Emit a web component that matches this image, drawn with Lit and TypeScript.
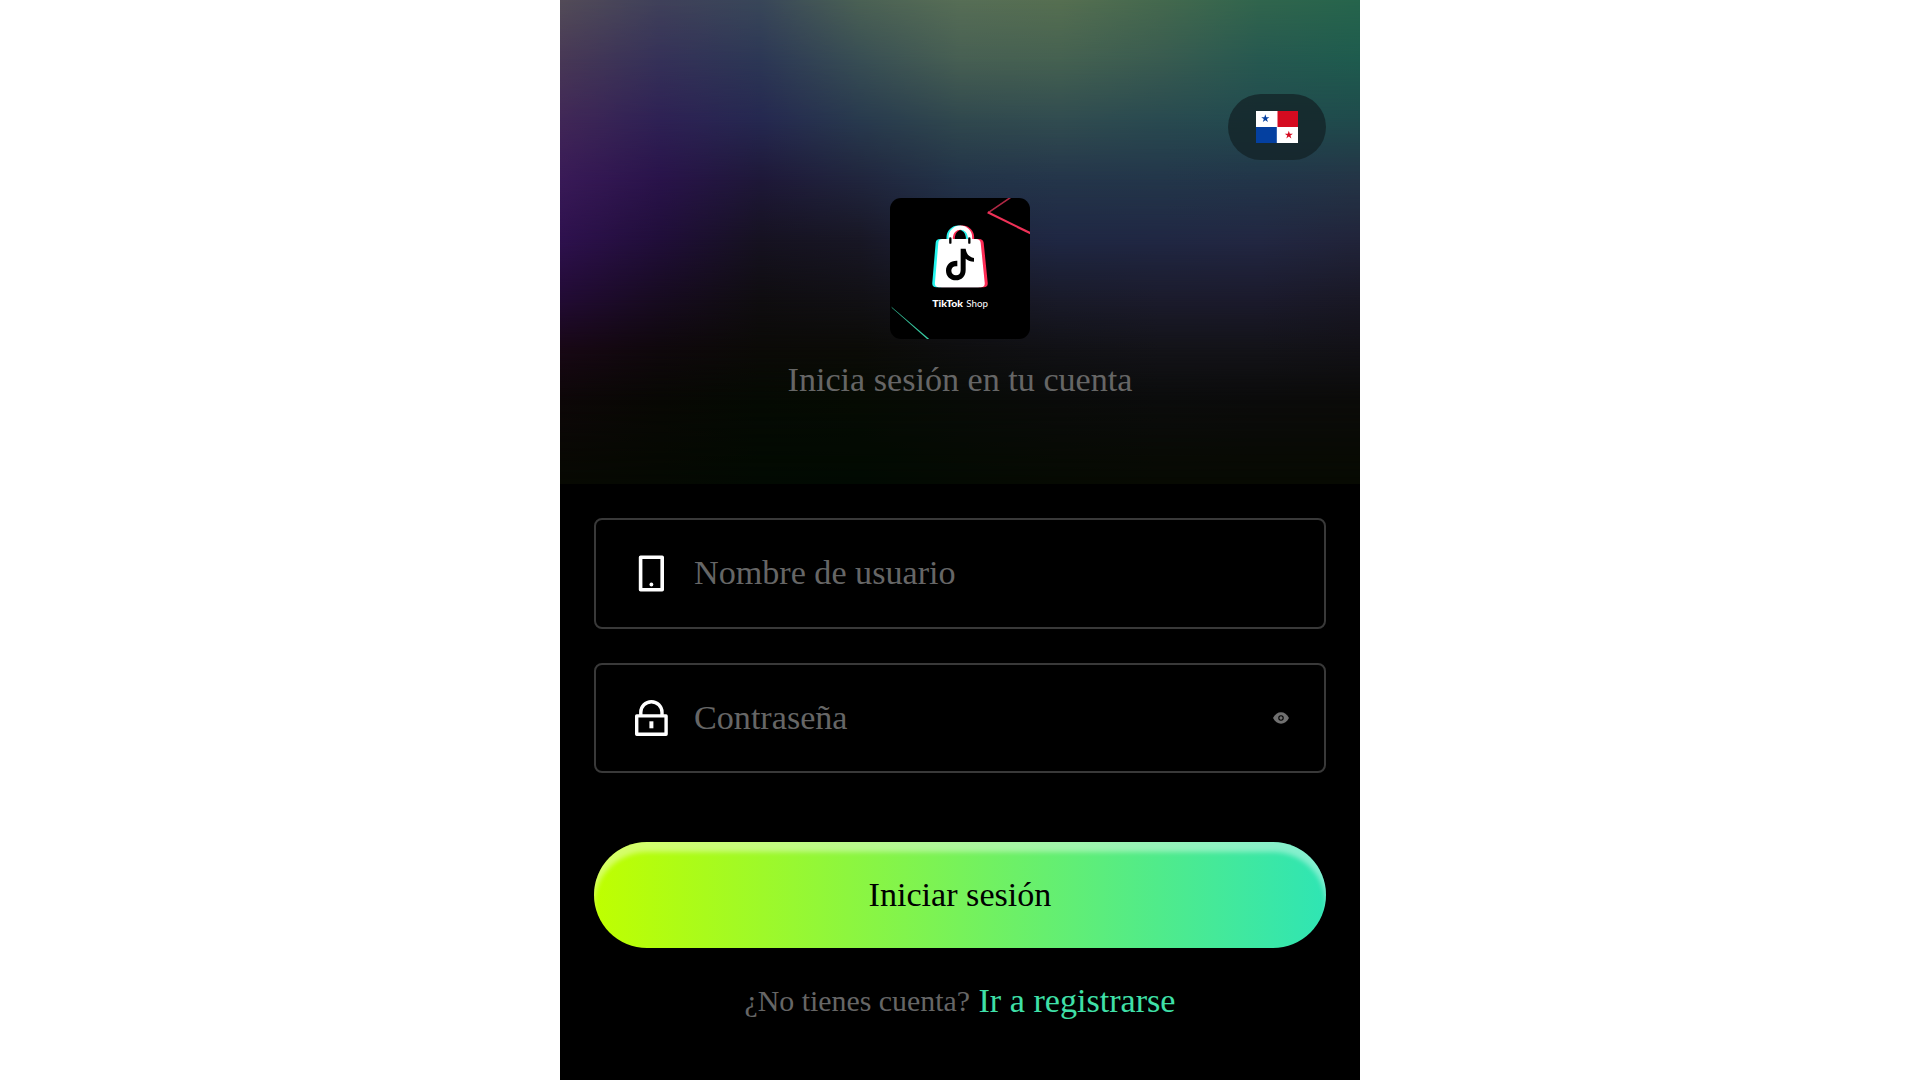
import { LitElement, html, css, svg } from 'lit';
import { customElement, property } from 'lit/decorators.js';
import { styleMap } from 'lit/directives/style-map.js';

// aurora colours, one entry per horizontal band, left to right
const AURORA: { y: number; colors: string[] }[] = [
  { y: 0, colors: ['#534c58', '#40415a', '#394759', '#4b6154', '#576e56', '#566f51', '#45694e', '#31654d', '#26654c'] },
  { y: 60, colors: ['#483856', '#353158', '#2c3755', '#384e54', '#475f53', '#456151', '#395b50', '#265850', '#1e5b4e'] },
  { y: 120, colors: ['#412757', '#2e2154', '#252850', '#283a4e', '#30484e', '#314c50', '#294a50', '#224b4f', '#1f4b4c'] },
  { y: 180, colors: ['#391a57', '#29134a', '#1e1838', '#20253d', '#223348', '#24354a', '#23364a', '#223549', '#243446'] },
  { y: 240, colors: ['#2e114e', '#200e39', '#161221', '#181725', '#1e233c', '#1f2743', '#202743', '#222742', '#21243a'] },
  { y: 300, colors: ['#220b34', '#170b20', '#0f0d10', '#111014', '#161620', '#191a29', '#1b1b2c', '#1b1a2c', '#191825'] },
  { y: 350, colors: ['#180815', '#0f080c', '#0b0a07', '#0b0b07', '#0e0e0f', '#111115', '#131318', '#131318', '#121116'] },
  { y: 400, colors: ['#0d0708', '#080804', '#050a03', '#060b03', '#080b07', '#0a0b0a', '#0b0c0c', '#0b0b0b', '#0b0b09'] },
  { y: 484, colors: ['#070902', '#050902', '#020a02', '#010a02', '#040a02', '#060a02', '#070a02', '#070a02', '#070a02'] },
];

const phoneIcon = svg`
  <svg width="38" height="38" viewBox="0 0 38 38" fill="none" stroke="#fff" stroke-width="3.6" stroke-linejoin="round">
    <rect x="8.6" y="3.3" width="21.6" height="32.4" />
    <circle cx="19.4" cy="30.5" r="1.9" fill="#fff" stroke="none" />
  </svg>`;

const lockIcon = svg`
  <svg width="38" height="38" viewBox="0 0 38 38" fill="none" stroke="#fff" stroke-width="3.4" stroke-linejoin="round">
    <path d="M8.8 16V13.3a10.6 10.6 0 0 1 21.2 0V16" />
    <rect x="4.7" y="16.9" width="29.4" height="18.4" />
    <path d="M19.4 22.3V29.3" stroke-width="4" />
  </svg>`;

const eyeIcon = svg`
  <svg width="16" height="12" viewBox="0 0 16 12">
    <path d="M0 6C2 2.2 4.8 .3 8 .3S14 2.2 16 6C14 9.8 11.2 11.7 8 11.7S2 9.8 0 6Z" fill="#707070" />
    <circle cx="8" cy="6" r="2.2" fill="none" stroke="#000" stroke-width="1.1" />
  </svg>`;

@customElement('aurora-bg')
export class AuroraBg extends LitElement {
  static styles = css`
    :host {
      display: grid;
    }

    .band {
      grid-area: 1 / 1;
    }
  `;

  render() {
    return AURORA.map(({ y, colors }, i) => {
      const mask = i ? `linear-gradient(transparent ${AURORA[i - 1].y}px, #000 ${y}px)` : 'none';
      return html`<div
        class="band"
        style=${styleMap({
          backgroundImage: `linear-gradient(90deg, ${colors.join(', ')})`,
          maskImage: mask,
        })}
      ></div>`;
    });
  }
}

@customElement('shop-logo')
export class ShopLogo extends LitElement {
  static styles = css`
    :host {
      display: block;
      width: 140px;
      height: 141px;
      border-radius: 11px;
      overflow: hidden;
      background: #000;
    }

    svg {
      display: block;
    }

    .word {
      font-family: Lato, sans-serif;
      font-size: 30px;
      fill: #fff;
    }

    .word--bold {
      font-weight: 900;
    }
  `;

  render() {
    const bag = 'M150 123H250Q262 123 264 134L276 253Q278 268 264 268H139Q125 268 127 253L137 134Q138 123 150 123Z';
    const handle = 'M180 128V118a29 29 0 0 1 58 0V128';
    return html`
      <svg width="140" height="141" viewBox="0 0 420 423">
        <path d="M361 -1L296 43" fill="none" stroke="#b02845" stroke-width="5" />
        <path d="M293 43L422 106" fill="none" stroke="#ee3157" stroke-width="6.5" />
        <path d="M5 328L118 424L113 424Z" fill="#3fe0b4" stroke="#3fe0b4" stroke-width="1" />
        <g fill="none" stroke-width="13">
          <path d=${handle} stroke="#25f4ee" transform="translate(-4)" />
          <path d=${handle} stroke="#fe2c55" transform="translate(8)" />
          <path d=${handle} stroke="#fff" transform="translate(2)" />
        </g>
        <path d=${bag} fill="#25f4ee" />
        <path d=${bag} fill="#fe2c55" transform="translate(17)" />
        <path d=${bag} fill="#fff" transform="translate(8)" />
        <path d="M181 121V134M238 121V134" stroke="#000" stroke-width="7" stroke-linecap="round" />
        <path
          d="M212 152H227C229 167 237 177 252 180V191C242 191 234 188 227 182V216C227 235 215 247 198 247C181 247 168 235 168 218C168 199 182 187 202 188V205C191 203 184 209 184 218C184 226 190 232 198 232C207 232 212 226 212 216Z"
          fill="#000"
        />
        <text class="word word--bold" x="127" y="326" textLength="92" lengthAdjust="spacingAndGlyphs">TikTok</text>
        <text class="word" x="229" y="326" textLength="65" lengthAdjust="spacingAndGlyphs">Shop</text>
      </svg>
    `;
  }
}

@customElement('form-field')
export class FormField extends LitElement {
  @property() label = '';
  @property({ attribute: false }) icon: unknown;
  @property({ type: Boolean }) secret = false;

  static styles = css`
    :host {
      display: flex;
      align-items: center;
      box-sizing: border-box;
      height: 110px;
      padding: 0 35px 0 36px;
      border: 2px solid #393939;
      border-radius: 8px;
    }

    svg {
      display: block;
    }

    .field__label {
      flex: 1;
      margin-left: 24px;
      color: #666;
      font-size: 34.13px;
      line-height: 40px;
    }
  `;

  render() {
    return html`
      ${this.icon}
      <span class="field__label">${this.label}</span>
      ${this.secret ? eyeIcon : ''}
    `;
  }
}

@customElement('app-root')
export class AppRoot extends LitElement {
  static styles = css`
    :host {
      display: flex;
      justify-content: center;
      height: 1080px;
      background: #fff;
      font-family: 'Liberation Serif', 'Times New Roman', serif;
    }

    .page {
      display: flex;
      flex-direction: column;
      width: 800px;
      background: #000;
    }

    .hero {
      display: grid;
      height: 484px;
    }

    .hero > * {
      grid-area: 1 / 1;
    }

    .hero__content {
      z-index: 1;
      display: flex;
      flex-direction: column;
      align-items: center;
      padding: 94px 34px 0;
    }

    .lang {
      align-self: flex-end;
      display: flex;
      align-items: center;
      justify-content: center;
      width: 98px;
      height: 66px;
      margin-bottom: 38px;
      border-radius: 33px;
      background: rgba(19, 33, 38, 0.75);
    }

    .hero__title {
      margin-top: 21px;
      color: #666;
      font-size: 34.13px;
      line-height: 40px;
    }

    .form {
      display: flex;
      flex-direction: column;
      padding: 34px 34px 0;
    }

    .form__user {
      height: 111px;
      margin-bottom: 34px;
      padding-bottom: 1px;
    }

    .submit {
      height: 106px;
      margin-top: 69px;
      border: 0;
      border-radius: 53px;
      background: linear-gradient(90deg, #bfff00, #2fe5b4);
      box-shadow: inset 0 10px 5px rgba(255, 255, 255, 0.4);
      color: #000;
      font-family: inherit;
      font-size: 34.13px;
    }

    .signup {
      display: flex;
      align-items: center;
      justify-content: center;
      gap: 8.5px;
      margin-top: 33px;
      color: #666;
      font-size: 29.87px;
      line-height: 40px;
    }

    .signup__link {
      color: #3fe0a8;
      font-size: 34.13px;
    }
  `;

  render() {
    return html`
      <div class="page">
        <div class="hero">
          <aurora-bg></aurora-bg>
          <div class="hero__content">
            <div class="lang">
              <svg width="42" height="32" viewBox="0 0 42 32">
                <rect width="42" height="32" fill="#fff" />
                <rect x="21.5" width="20.5" height="16" fill="#d50b20" />
                <rect y="16" width="20.8" height="16" fill="#0440a0" />
                <path d="M9.3 3.3l1 3h3.1l-2.5 1.8 1 3-2.6-1.9-2.5 1.9 1-3-2.6-1.8h3.1z" fill="#0440a0" />
                <path d="M32.8 19.7l1 3h3.1l-2.5 1.8 1 3-2.6-1.9-2.5 1.9 1-3-2.6-1.8h3.1z" fill="#d50b20" />
              </svg>
            </div>
            <shop-logo></shop-logo>
            <div class="hero__title">Inicia sesión en tu cuenta</div>
          </div>
        </div>
        <div class="form">
          <form-field class="form__user" label="Nombre de usuario" .icon=${phoneIcon}></form-field>
          <form-field label="Contraseña" .icon=${lockIcon} secret></form-field>
          <button class="submit">Iniciar sesión</button>
          <div class="signup">
            <span>¿No tienes cuenta?</span>
            <span class="signup__link">Ir a registrarse</span>
          </div>
        </div>
      </div>
    `;
  }
}
